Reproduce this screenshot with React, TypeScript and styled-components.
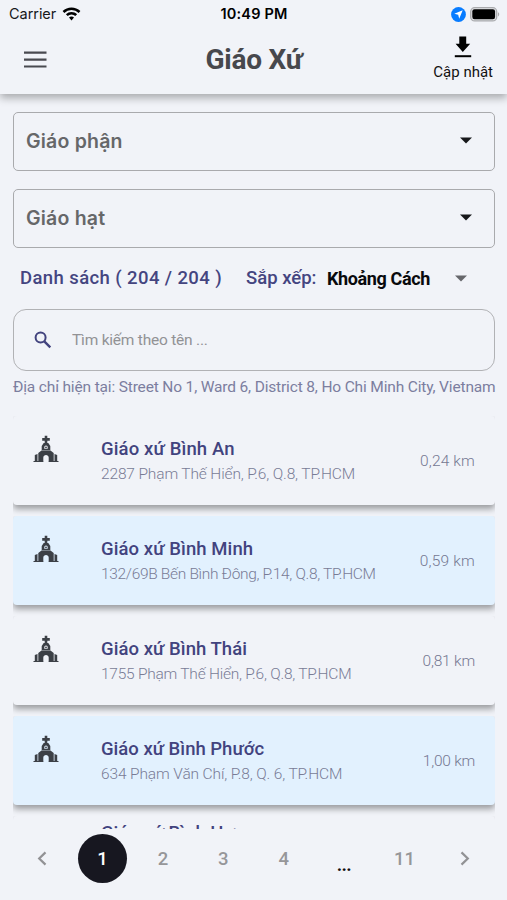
import React from "react";
import styled, { createGlobalStyle } from "styled-components";

const GlobalStyle = createGlobalStyle`
  * { box-sizing: border-box; }
  body { margin: 0; background: #f1f3f8; }
  button { border: 0; padding: 0; background: none; font: inherit; color: inherit; }
`;

const Screen = styled.div`
  width: 507px;
  height: 900px;
  display: flex;
  flex-direction: column;
  overflow: hidden;
  background: #f1f3f8;
  font-family: Roboto, "Noto Sans", sans-serif;
  white-space: nowrap;
`;

const Top = styled.header`
  height: 94px;
  flex: none;
  box-shadow: 0 4px 8px rgba(0, 0, 0, 0.3);
  background: #f1f3f8;
`;

const StatusBar = styled.div`
  height: 28px;
  padding: 0 8px 0 9px;
  display: grid;
  grid-template-columns: 1fr auto 1fr;
  align-items: center;
  font: 400 14.5px/28px Inter, sans-serif;
  color: #17181b;
`;

const Carrier = styled.div`
  display: flex;
  align-items: center;
  gap: 6px;
  letter-spacing: -0.05px;
`;

const Clock = styled.div`
  font-weight: 600;
  font-size: 14.5px;
  letter-spacing: 0.15px;
  color: #000;
`;

const StatusIcons = styled.div`
  display: flex;
  justify-content: flex-end;
  align-items: center;
  gap: 4px;
  margin-right: -1px;
`;

const NavBar = styled.div`
  height: 66px;
  padding: 0 14px 0 24px;
  display: grid;
  grid-template-columns: 1fr auto 1fr;
  align-items: center;
`;

const Title = styled.h1`
  margin: 0 9px 3px 0;
  font-size: 28px;
  line-height: 34px;
  font-weight: 700;
  letter-spacing: -0.25px;
  color: #47484d;
`;

const MenuButton = styled.button`
  display: flex;
  margin-bottom: 3px;
`;

const UpdateButton = styled.button`
  justify-self: end;
  display: flex;
  flex-direction: column;
  align-items: center;
  gap: 5px;
  margin-bottom: 5px;
  font-size: 15px;
  line-height: 18px;
  color: #111;
`;

const Content = styled.main`
  flex: 1;
  min-height: 0;
  padding: 18px 12px 0 13px;
  display: flex;
  flex-direction: column;
`;

const Filters = styled.div`
  display: flex;
  flex-direction: column;
  gap: 18px;
`;

const Select = styled.div`
  height: 59px;
  padding: 0 22px 2px 12px;
  display: flex;
  align-items: center;
  justify-content: space-between;
  border: 1.5px solid #a9aaad;
  border-radius: 5px;
  font: 600 19.5px Inter, sans-serif;
  letter-spacing: 0.2px;
  color: #666769;
`;

const SortRow = styled.div`
  height: 60px;
  margin-bottom: 1px;
  padding: 0 28px 0 7px;
  display: flex;
  align-items: center;
  font-size: 18.5px;
  font-weight: 500;
  color: #444580;
`;

const Count = styled.span`
  width: 226px;
  letter-spacing: 0.4px;
`;

const SortLabel = styled.span`
  width: 81px;
`;

const SortValue = styled.span`
  flex: 1;
  font-weight: 700;
  font-size: 18px;
  letter-spacing: -0.38px;
  color: #090a0d;
`;

const Search = styled.label`
  height: 62px;
  flex: none;
  padding: 0 20px 1px 20px;
  display: flex;
  align-items: center;
  gap: 20px;
  border: 1.5px solid #b1b2b5;
  border-radius: 13px;
`;

const SearchInput = styled.input`
  flex: 1;
  border: 0;
  outline: 0;
  padding: 0;
  background: none;
  font: 400 15.5px Roboto, sans-serif;
  letter-spacing: -0.22px;
  &::placeholder { color: #929295; opacity: 1; }
`;

const Address = styled.div`
  height: 32px;
  flex: none;
  font-size: 15.5px;
  line-height: 32px;
  font-weight: 400;
  letter-spacing: -0.16px;
  color: #7c7e9f;
`;

const List = styled.div`
  height: 430px;
  flex: none;
  margin: -4px -12px 0 -13px;
  padding: 17px 12px 0 13px;
  display: flex;
  flex-direction: column;
  gap: 11px;
  overflow: hidden;
`;

const Card = styled.article<{ $tinted: boolean }>`
  height: 89px;
  flex: none;
  padding: 0 20px 0 20px;
  display: grid;
  grid-template-columns: 68px 1fr auto;
  border-radius: 4px;
  background: ${(p) => (p.$tinted ? "#e2f1fe" : "#f1f3f8")};
  box-shadow: 0 4px 6px rgba(0, 0, 0, 0.36);
  clip-path: inset(0 0 -11px 0);
`;

const ChurchSlot = styled.div`
  padding-top: 19px;
`;

const Info = styled.div<{ $raised: boolean }>`
  padding-top: ${(p) => (p.$raised ? 4 : 20)}px;
`;

const Name = styled.div<{ $spacing: number }>`
  font-size: 18.5px;
  line-height: 26px;
  font-weight: 500;
  letter-spacing: ${(p) => p.$spacing}px;
  color: #42437e;
`;

const Street = styled.div<{ $spacing: number }>`
  font-size: 15.5px;
  line-height: 25px;
  font-weight: 300;
  letter-spacing: ${(p) => p.$spacing}px;
  color: #797c96;
`;

const Distance = styled.div<{ $spacing: number }>`
  align-self: center;
  font-size: 15.5px;
  font-weight: 300;
  letter-spacing: ${(p) => p.$spacing}px;
  color: #757892;
`;

const Pager = styled.nav`
  height: 59px;
  margin: 0 -12px 0 -13px;
  padding: 0 12px 0 12px;
  display: grid;
  grid-template-columns: repeat(8, 60.4px);
  align-items: center;
  justify-items: center;
  font-size: 18.5px;
  font-weight: 500;
  color: #969699;
`;

const PageButton = styled.button<{ $active?: boolean }>`
  width: 49px;
  height: 49px;
  display: flex;
  align-items: center;
  justify-content: center;
  border-radius: 50%;
  background: ${(p) => (p.$active ? "#171720" : "transparent")};
  color: ${(p) => (p.$active ? "#fff" : "inherit")};
`;

const Ellipsis = styled.span`
  padding-top: 13px;
  font-weight: 900;
  font-size: 16px;
  color: #111;
`;

const Wifi = () => (
  <svg width="19" height="15" viewBox="0 0 19 15" fill="#000">
    <path d="M9.5 0.4c3.4 0 6.5 1.3 8.9 3.6l-1.7 1.9a10.3 10.3 0 0 0-14.4 0L.6 4A12.8 12.8 0 0 1 9.5.4Z" />
    <path d="M9.5 5c2.1 0 4.1.8 5.6 2.3l-1.8 1.8a5.4 5.4 0 0 0-7.6 0L3.9 7.3A8 8 0 0 1 9.5 5Z" />
    <path d="M9.5 9.5c1 0 1.8.3 2.5.9L9.5 13.400 7 10.400c.7-.6 1.500-.9 2.500-.9Z" />
  </svg>
);

const Location = () => (
  <svg width="15" height="15" viewBox="0 0 15 15">
    <circle cx="7.5" cy="7.5" r="7.4" fill="#087cff" />
    <path d="M11.7 3.300 8.200 11.700 7.200 7.800 3.300 6.800Z" fill="#fff" />
  </svg>
);

const Battery = () => (
  <svg width="30" height="15" viewBox="0 0 30 15">
    <rect x=".7" y=".7" width="26" height="13.2" rx="4" fill="#e3e4e8" stroke="#a9aaad" strokeWidth="1.3" />
    <rect x="2.300" y="2.300" width="22.800" height="10" rx="2.200" fill="#000" />
    <path d="M28 5.200c1.700.6 1.700 3.600 0 4.200Z" fill="#a9aaad" />
  </svg>
);

const Menu = () => (
  <svg width="23" height="17" viewBox="0 0 23 17" stroke="#494a50" strokeWidth="2.2">
    <path d="M0 1.700h22.500M0 8.600h22.500M0 15.500h22.500" />
  </svg>
);

const Download = () => (
  <svg width="18" height="22" viewBox="0 0 18 22">
    <path d="M5.300.5h6.900v7.300h4L8.800 16 1.600 7.800h3.700Z" fill="#000" />
    <path d="M.8 20.200h16.400" stroke="#000" strokeWidth="2" />
  </svg>
);

const Caret = ({ color = "#17181b" }: { color?: string }) => (
  <svg width="12" height="7" viewBox="0 0 12 7">
    <path d="M0 .4h12L6 6.500Z" fill={color} />
  </svg>
);

const Magnifier = () => (
  <svg width="18" height="18" viewBox="0 0 18 18" fill="none" stroke="#42437e">
    <circle cx="6.600" cy="6.600" r="5" strokeWidth="2" />
    <path d="m10.300 10.300 6 6" strokeWidth="2.400" />
  </svg>
);

const Church = () => (
  <svg width="26" height="28" viewBox="0 0 26 28" fill="#3c4046">
    <path d="M11.700.8h2.600v2.300h2.500v2.600h-2.500v2.500h-2.600V5.700H9.200V3.100h2.500Z" />
    <path d="M10.700 8.100h4.600l2 2.900v4.200H8.700V11Zm2.300 2.300a1.700 1.700 0 0 0-1.700 1.700v1.700h3.400v-1.700a1.700 1.700 0 0 0-1.700-1.700Z" fillRule="evenodd" />
    <circle cx="13" cy="12.300" r=".9" />
    <path d="M8.500 15.600h9l3.200 2.500v8.500h-5v-4c0-3.400-5.400-3.400-5.400 0v4h-5v-8.500Z" />
    <path d="M1.800 20.100 4.500 19v7.300H1.800ZM21.500 19l2.700 1.100v6.200h-2.700ZM.5 26h9.800v1H.5Zm15.200 0h9.800v1h-9.800Z" />
  </svg>
);

const Chevron = ({ next = false }: { next?: boolean }) => (
  <svg width="10" height="15" viewBox="0 0 10 15" fill="none" stroke="#929295" strokeWidth="2.200">
    <path d={next ? "m1.500 1.400 6.300 6.100-6.300 6.100" : "M8.500 1.400 2.200 7.500l6.300 6.100"} />
  </svg>
);

const parishes = [
  { name: "Giáo xứ Bình An", street: "2287 Phạm Thế Hiển, P.6, Q.8, TP.HCM", km: "0,24 km", ns: 0.13, ss: -0.14, ks: 0.15 },
  { name: "Giáo xứ Bình Minh", street: "132/69B Bến Bình Đông, P.14, Q.8, TP.HCM", km: "0,59 km", ns: 0.08, ss: -0.32, ks: 0.2 },
  { name: "Giáo xứ Bình Thái", street: "1755 Phạm Thế Hiển, P.6, Q.8, TP.HCM", km: "0,81 km", ns: 0.05, ss: -0.24, ks: -0.2 },
  { name: "Giáo xứ Bình Phước", street: "634 Phạm Văn Chí, P.8, Q. 6, TP.HCM", km: "1,00 km", ns: 0, ss: -0.13, ks: -0.25 },
  { name: "Giáo xứ Bình Hưng", street: "", km: "", ns: 0, ss: 0, ks: 0 },
];

export default function App() {
  return (
    <Screen>
      <GlobalStyle />
      <Top>
        <StatusBar>
          <Carrier>Carrier <Wifi /></Carrier>
          <Clock>10:49 PM</Clock>
          <StatusIcons><Location /><Battery /></StatusIcons>
        </StatusBar>
        <NavBar>
          <MenuButton aria-label="Menu"><Menu /></MenuButton>
          <Title>Giáo Xứ</Title>
          <UpdateButton><Download />Cập nhật</UpdateButton>
        </NavBar>
      </Top>
      <Content>
        <Filters>
          <Select>Giáo phận<Caret /></Select>
          <Select>Giáo hạt<Caret /></Select>
        </Filters>
        <SortRow>
          <Count>Danh sách ( 204 / 204 )</Count>
          <SortLabel>Sắp xếp:</SortLabel>
          <SortValue>Khoảng Cách</SortValue>
          <Caret color="#66676b" />
        </SortRow>
        <Search>
          <Magnifier />
          <SearchInput placeholder="Tìm kiếm theo tên ..." />
        </Search>
        <Address>Địa chỉ hiện tại: Street No 1, Ward 6, District 8, Ho Chi Minh City, Vietnam</Address>
        <List>
          {parishes.map((p, i) => (
            <Card key={p.name} $tinted={i % 2 === 1}>
              <ChurchSlot>{p.street && <Church />}</ChurchSlot>
              <Info $raised={!p.street}>
                <Name $spacing={p.ns}>{p.name}</Name>
                <Street $spacing={p.ss}>{p.street}</Street>
              </Info>
              <Distance $spacing={p.ks}>{p.km}</Distance>
            </Card>
          ))}
        </List>
        <Pager>
          <PageButton aria-label="Previous"><Chevron /></PageButton>
          <PageButton $active>1</PageButton>
          <PageButton>2</PageButton>
          <PageButton>3</PageButton>
          <PageButton>4</PageButton>
          <Ellipsis>...</Ellipsis>
          <PageButton>11</PageButton>
          <PageButton aria-label="Next"><Chevron next /></PageButton>
        </Pager>
      </Content>
    </Screen>
  );
}
